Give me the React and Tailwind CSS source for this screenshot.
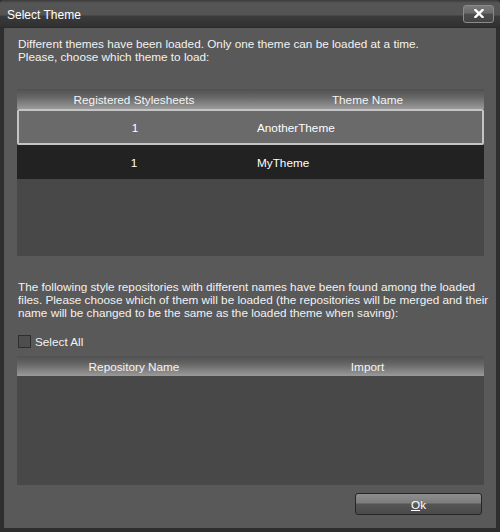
export default function App() {
  const font = { fontFamily: '"Liberation Sans", Arial, sans-serif' };
  return (
    <div className="w-[500px] h-[532px] bg-[#2e2e2e] flex flex-col text-white text-[11.75px] leading-[13px]" style={font}>
      {/* title bar */}
      <div className="h-[28px] flex items-center justify-between pl-[7px] pr-[6px] bg-[linear-gradient(to_bottom,#3a3a3a_0px,#555555_3px,#545454_15px,#3b3b3b_16px,#303030_27px,#262626_28px)] rounded-t-[4px]">
        <span className="text-[12px] text-white mt-[2px]">Select Theme</span>
        <div className="w-[31px] h-[18px] mt-[-1px] rounded-[3px] border border-[#8a8a8a] bg-[linear-gradient(to_bottom,#7a7a7a_0%,#6a6a6a_45%,#4c4c4c_50%,#444444_100%)] flex items-center justify-center">
          <svg width="10" height="9" viewBox="0 0 10 9">
            <path d="M1.5 1 L8.5 8 M8.5 1 L1.5 8" stroke="white" strokeWidth="2.4" strokeLinecap="square" />
          </svg>
        </div>
      </div>
      {/* content */}
      <div className="flex-1 mx-[4px] mb-[4px] bg-[#595959] border-l border-[#555] flex flex-col px-[12px] pt-[9px]">
        <p className="pl-[1px] text-[#f2f2f2] whitespace-nowrap">Different themes have been loaded. Only one theme can be loaded at a time.<br />Please, choose which theme to load:</p>

        <div className="mt-[26px] h-[167px] bg-[#484848] flex flex-col">
          <div className="h-[20px] flex bg-[linear-gradient(to_bottom,#505050_0%,#666666_40%,#9a9a9a_100%)] text-[#f4f4f4]">
            <div className="w-[234px] flex items-center justify-center">Registered Stylesheets</div>
            <div className="flex-1 flex items-center justify-center">Theme Name</div>
          </div>
          <div className="h-[36px] flex bg-[#6a6a6a] border-2 border-[#c4c4c4] rounded-[2px]">
            <div className="w-[232px] flex items-center justify-center">1</div>
            <div className="flex-1 flex items-center pl-[6px]">AnotherTheme</div>
          </div>
          <div className="h-[34px] flex bg-[#222222]">
            <div className="w-[234px] flex items-center justify-center">1</div>
            <div className="flex-1 flex items-center pl-[6px]">MyTheme</div>
          </div>
        </div>

        <p className="mt-[24px] pl-[1px] text-[#f2f2f2] whitespace-nowrap">The following style repositories with different names have been found among the loaded<br />files. Please choose which of them will be loaded (the repositories will be merged and their<br />name will be changed to be the same as the loaded theme when saving):</p>

        <div className="mt-[16px] flex items-center gap-[4px] pl-[1px]">
          <div className="w-[13px] h-[13px] border border-[#2e2e2e] bg-[#4e4e4e]" />
          <span className="text-[#f2f2f2]">Select All</span>
        </div>

        <div className="mt-[8px] h-[129px] bg-[#484848] flex flex-col">
          <div className="h-[20px] flex bg-[linear-gradient(to_bottom,#505050_0%,#666666_40%,#9a9a9a_100%)] text-[#f4f4f4]">
            <div className="w-[234px] flex items-center justify-center">Repository Name</div>
            <div className="flex-1 flex items-center justify-center">Import</div>
          </div>
        </div>

        <div className="mt-[8px] flex justify-end pr-[2px]">
          <div className="w-[127px] h-[22px] rounded-[3px] border border-[#262626] bg-[linear-gradient(to_bottom,#8e8e8e_0%,#7c7c7c_45%,#555555_50%,#4a4a4a_100%)] flex items-center justify-center text-white">
            <span><span className="underline">O</span>k</span>
          </div>
        </div>
      </div>
    </div>
  );
}
